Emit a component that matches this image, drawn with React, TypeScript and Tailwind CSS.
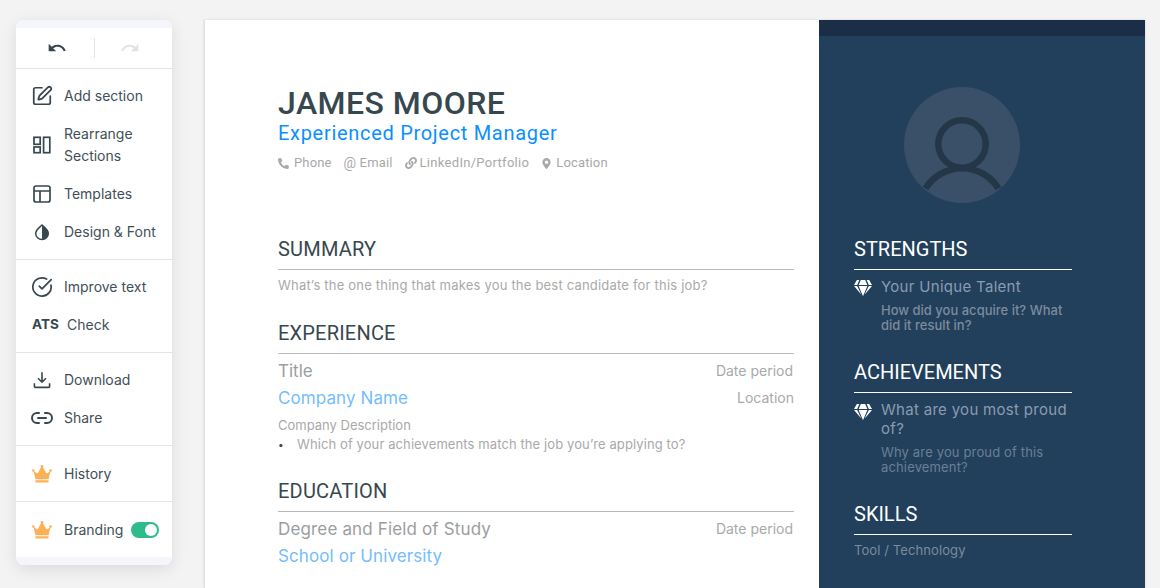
import React from "react";
import { SquarePen, CircleCheckBig, Link2 } from "lucide-react";
import { FaGem, FaPhoneAlt, FaLink, FaMapMarkerAlt } from "react-icons/fa";

const Crown = () => (
  <svg width="20" height="18" viewBox="0 0 20 18" fill="#fdb157">
    <path d="M1.6 6.2 5.6 8.6 9 2.2a1.2 1.2 0 0 1 2 0l3.4 6.4 4-2.4-1.8 8H3.4z" />
    <circle cx="1.4" cy="5.6" r="1.3" />
    <circle cx="18.6" cy="5.6" r="1.3" />
    <circle cx="10" cy="1.5" r="1.4" />
    <rect x="3.4" y="15.3" width="13.2" height="2.2" rx="0.4" />
  </svg>
);

const Rearrange = () => (
  <svg width="18" height="18" viewBox="0 0 18 18" fill="none" stroke="#37474f" strokeWidth="1.7">
    <rect x="1" y="1.3" width="6.2" height="7" />
    <rect x="1" y="11" width="6.2" height="5.7" />
    <rect x="10.6" y="1.3" width="6.2" height="15.4" />
  </svg>
);

const Templates = () => (
  <svg width="18" height="18" viewBox="0 0 18 18" fill="none" stroke="#37474f" strokeWidth="1.7">
    <rect x="1" y="1" width="16" height="16" rx="2" />
    <path d="M1 6h16M7 6v11" />
  </svg>
);

const Design = () => (
  <svg width="16" height="18" viewBox="0 0 16 18">
    <path d="M8 2 C5 5 1.7 7 1.7 10.4 A6.3 6.3 0 0 0 8 16.6 A6.3 6.3 0 0 0 14.3 10.4 C14.3 7 11 5 8 2Z" fill="none" stroke="#37474f" strokeWidth="1.5" />
    <path d="M8 2 C11 5 14.3 7 14.3 10.4 A6.3 6.3 0 0 1 8 16.6Z" fill="#37474f" />
  </svg>
);

const Download = () => (
  <svg width="18" height="18" viewBox="0 0 18 18" fill="none" stroke="#37474f" strokeWidth="1.6">
    <path d="M9 1.2v9.6M5 7.2l4 4 4-4" />
    <path d="M1.4 12.2v3.2a1 1 0 0 0 1 1h13.2a1 1 0 0 0 1-1v-3.2" />
  </svg>
);

const Item = ({ icon, children }: { icon: React.ReactNode; children: React.ReactNode }) => (
  <div className="flex items-center h-[38px] pl-[10px] text-[14px] text-[#414f57]">
    <div className="w-[32px] flex items-center justify-center shrink-0">{icon}</div>
    <div className="ml-[6px] pb-[2px]">{children}</div>
  </div>
);

const Divider = () => <div className="h-px bg-[#e4e4e4] shrink-0" />;

const Sidebar = () => (
  <div className="w-[156px] h-[545px] mt-5 ml-4 shrink-0 bg-white rounded-lg overflow-hidden shadow-[0_4px_16px_rgba(0,0,0,0.1)] flex flex-col font-['Inter',sans-serif]">
    <div className="h-2 bg-[#f5f6fb]" />
    <div className="h-10 flex items-center">
      <div className="w-[78px] flex justify-end pr-[27px]">
        <svg width="20" height="20" viewBox="0 0 24 24" fill="#37474f">
          <path d="M12.5 8c-2.65 0-5.05.99-6.9 2.6L2 7v9h9l-3.62-3.62c1.39-1.16 3.16-1.88 5.12-1.88 3.54 0 6.55 2.31 7.6 5.5l2.37-.78C21.08 11.03 17.15 8 12.5 8z" />
        </svg>
      </div>
      <div className="w-px h-5 bg-[#e4e4e4]" />
      <div className="pl-[25px]">
        <svg width="20" height="20" viewBox="0 0 24 24" fill="#e3e3e3">
          <path d="M18.4 10.6C16.55 8.99 14.15 8 11.5 8c-4.65 0-8.58 3.03-9.96 7.22L3.9 16c1.05-3.19 4.05-5.5 7.6-5.5 1.95 0 3.73.72 5.12 1.88L13 16h9V7l-3.6 3.6z" />
        </svg>
      </div>
    </div>
    <Divider />
    <div className="py-2">
      <Item icon={<SquarePen size={22} color="#37474f" strokeWidth={1.9} />}>Add section</Item>
      <div className="flex items-center h-[60px] pl-[10px] text-[14px] leading-[22px] text-[#414f57]">
        <div className="w-[32px] flex justify-center shrink-0"><Rearrange /></div>
        <div className="ml-[6px]">Rearrange<br />Sections</div>
      </div>
      <Item icon={<Templates />}>Templates</Item>
      <Item icon={<Design />}>Design &amp; Font</Item>
    </div>
    <Divider />
    <div className="py-2">
      <Item icon={<CircleCheckBig size={22} color="#37474f" strokeWidth={1.9} />}>Improve text</Item>
      <div className="flex items-center h-[38px] pl-4 pb-[2px] text-[14px] text-[#414f57]">
        <span className="font-bold w-[35px] text-[13.5px] text-[#37474f]">ATS</span>
        <span>Check</span>
      </div>
    </div>
    <Divider />
    <div className="py-2">
      <Item icon={<Download />}>Download</Item>
      <Item icon={<Link2 size={24} color="#37474f" strokeWidth={2} />}>Share</Item>
    </div>
    <Divider />
    <div className="pt-[9px] pb-2">
      <Item icon={<Crown />}>History</Item>
    </div>
    <Divider />
    <div className="pt-[9px] pb-2">
      <div className="flex items-center h-[38px] pl-[10px] text-[14px] text-[#414f57]">
        <div className="w-[32px] flex justify-center shrink-0"><Crown /></div>
        <div className="ml-[6px] pb-[2px]">Branding</div>
        <div className="ml-2 w-7 h-4 rounded-full bg-[#2ebd8a] flex items-center justify-end pr-[2px]">
          <div className="w-3 h-3 bg-white rounded-full" />
        </div>
      </div>
    </div>
    <div className="h-2 bg-[#f5f6fb] mt-auto" />
  </div>
);

const Heading = ({ children, className }: { children: React.ReactNode; className?: string }) => (
  <div className={"text-[20px] leading-[28px] pb-[6px] border-b border-[#b9b9b9] tracking-[0.2px] text-[#37474f] font-['Roboto',sans-serif] " + (className ?? "")}>{children}</div>
);

const Left = () => (
  <div className="w-[615px] h-[568px] bg-white border-l border-[#e2e2e2] pl-[73px] pr-[25px] pt-[65px] shrink-0 font-['Inter',sans-serif]">
    <div className="text-[32px] leading-[36px] font-medium tracking-[0.45px] text-[#37474f] font-['Roboto',sans-serif]">JAMES MOORE</div>
    <div className="text-[20px] leading-[24px] text-[#0b8fff] font-['Roboto',sans-serif] tracking-[0.7px]">Experienced Project Manager</div>
    <div className="flex items-center mt-[8px] text-[13px] leading-[20px] tracking-[0.15px] text-[#a9a9a9] font-['Roboto',sans-serif]">
      <FaPhoneAlt size={11} />
      <span className="ml-[5px]">Phone</span>
      <span className="ml-[12px] text-[14px] w-[13px]">@</span>
      <span className="ml-[3px]">Email</span>
      <FaLink size={12} className="ml-[12px]" />
      <span className="ml-[3px] tracking-[0.3px]">LinkedIn/Portfolio</span>
      <FaMapMarkerAlt size={11} className="ml-[12px]" />
      <span className="ml-[4px]">Location</span>
    </div>
    <Heading className="mt-[62px]">SUMMARY</Heading>
    <div className="text-[13px] leading-[16px] mt-[7px] tracking-[0.2px] text-[#a9a9a9]">What’s the one thing that makes you the best candidate for this job?</div>
    <Heading className="mt-[26px]">EXPERIENCE</Heading>
    <div className="flex justify-between items-center mt-[4px] h-[27px]">
      <span className="text-[17px] text-[#9a9ea1]">Title</span>
      <span className="text-[14px] text-[#a9a9a9] pr-px pb-[2px]">Date period</span>
    </div>
    <div className="flex justify-between items-center h-[27px]">
      <span className="text-[17px] tracking-[0.1px] text-[#74bdfd]">Company Name</span>
      <span className="text-[14px] text-[#a9a9a9] pb-[3px]">Location</span>
    </div>
    <div className="text-[13px] leading-[19px] mt-[4px] text-[#a9a9a9]">Company Description</div>
    <div className="text-[13px] leading-[19px] tracking-[0.1px] text-[#a9a9a9] flex">
      <span className="w-[19px] text-[#37474f] text-[10px]">•</span>
      <span>Which of your achievements match the job you’re applying to?</span>
    </div>
    <Heading className="mt-[23px]">EDUCATION</Heading>
    <div className="flex justify-between items-center mt-[4px] h-[27px]">
      <span className="text-[17px] tracking-[0.15px] text-[#9a9ea1]">Degree and Field of Study</span>
      <span className="text-[14px] text-[#a9a9a9] pr-px pb-[2px]">Date period</span>
    </div>
    <div className="flex items-center h-[27px]">
      <span className="text-[17px] tracking-[0.1px] text-[#74bdfd]">School or University</span>
    </div>
  </div>
);

const RHeading = ({ children, className }: { children: React.ReactNode; className?: string }) => (
  <div className={"text-[20px] leading-[28px] pb-[6px] border-b border-white text-white font-['Roboto',sans-serif] " + (className ?? "")}>{children}</div>
);

const Right = () => (
  <div className="w-[326px] h-[568px] bg-[#223f5c] shrink-0 font-['Inter',sans-serif]">
    <div className="h-4 bg-[#1a2f47]" />
    <div className="pl-[35px] pr-[73px]">
      <div className="flex justify-center mt-[51px] pr-[2px]">
        <svg width="116" height="116" viewBox="0 0 116 116" fill="none">
          <circle cx="58" cy="58" r="58" fill="#3a5068" />
          <circle cx="58" cy="57" r="23.7" stroke="#243748" strokeWidth="6.5" />
          <path d="M21.5 101.5A43 43 0 0 1 94.5 101.5" stroke="#243748" strokeWidth="6.5" />
        </svg>
      </div>
      <RHeading className="mt-[32px]">STRENGTHS</RHeading>
      <div className="flex mt-[6px]">
        <FaGem size={18} color="#ffffff" className="shrink-0 mt-[3px]" />
        <div className="ml-[9px]">
          <div className="text-[15px] leading-[21px] tracking-[0.3px] text-[#8a9cb0]">Your Unique Talent</div>
          <div className="text-[13px] leading-[15px] mt-[6px] font-medium text-[#7c8c9d]">How did you acquire it? What did it result in?</div>
        </div>
      </div>
      <RHeading className="mt-[25px]">ACHIEVEMENTS</RHeading>
      <div className="flex mt-[7px]">
        <FaGem size={18} color="#ffffff" className="shrink-0 mt-[3px]" />
        <div className="ml-[9px]">
          <div className="text-[15px] leading-[19px] tracking-[0.3px] text-[#8a9cb0]">What are you most proud of?</div>
          <div className="text-[13px] leading-[15px] mt-[7px] tracking-[0.15px] text-[#6a7f94]">Why are you proud of this achievement?</div>
        </div>
      </div>
      <RHeading className="mt-[25px]">SKILLS</RHeading>
      <div className="text-[13px] leading-[16px] mt-[7px] tracking-[0.1px] text-[#7c8c9d]">Tool / Technology</div>
    </div>
  </div>
);

export default function App() {
  return (
    <div className="w-[1160px] h-[588px] overflow-hidden bg-[#f3f3f3] flex items-start">
      <Sidebar />
      <div className="flex mt-5 ml-[32px] shadow-[0_0_2px_rgba(0,0,0,0.15)]">
        <Left />
        <Right />
      </div>
    </div>
  );
}
